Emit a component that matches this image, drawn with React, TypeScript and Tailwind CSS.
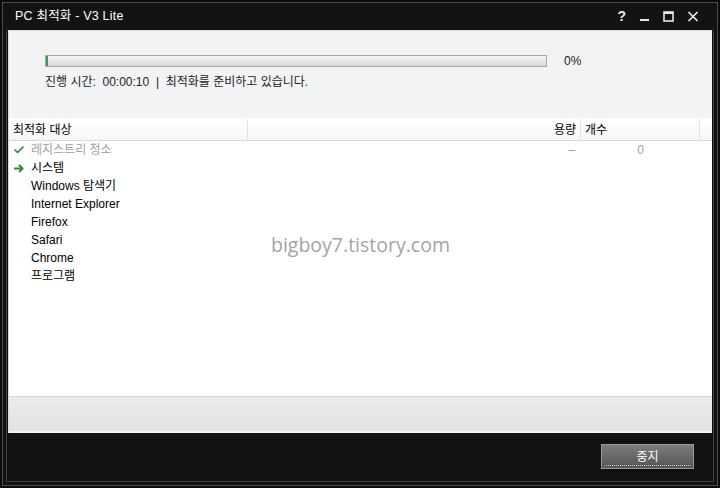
import { Check } from 'lucide-react';

const items = [
  { name: '레지스트리 청소', state: 'done' },
  { name: '시스템', state: 'active' },
  { name: 'Windows 탐색기', state: '' },
  { name: 'Internet Explorer', state: '' },
  { name: 'Firefox', state: '' },
  { name: 'Safari', state: '' },
  { name: 'Chrome', state: '' },
  { name: '프로그램', state: '' },
];

const font = { fontFamily: '"Liberation Sans", "Noto Sans CJK KR", sans-serif' };

function Arrow() {
  return (
    <svg width="11" height="9" viewBox="0 0 11 9">
      <path d="M0 4.5h8M5 1l3.5 3.5L5 8" stroke="#2f8a3c" strokeWidth="2" fill="none" />
    </svg>
  );
}

export default function App() {
  return (
    <div className="w-[720px] h-[488px] bg-[#0b0b0b] p-[2px] text-[12px]" style={font}>
      <div className="h-full border border-[#4b4b4b] flex flex-col bg-[#131313]">
        {/* title bar */}
        <div className="h-[26px] shrink-0 flex items-center pl-[12px] pr-[18px] text-white">
          <span className="text-[12.5px] tracking-[0.2px]">PC 최적화 - V3 Lite</span>
          <div className="ml-auto flex items-center gap-[13px] text-[#e8e8e8]">
            <span className="text-[14px] font-bold leading-none">?</span>
            <svg width="11" height="11" viewBox="0 0 11 11"><rect x="1" y="8" width="9" height="2" fill="#e8e8e8" /></svg>
            <svg width="11" height="11" viewBox="0 0 11 11"><rect x="1" y="1" width="9" height="9" fill="none" stroke="#e8e8e8" strokeWidth="1.6" /><rect x="1" y="1" width="9" height="2" fill="#e8e8e8" /></svg>
            <svg width="12" height="11" viewBox="0 0 12 11"><path d="M1.5 1l9 9M10.5 1l-9 9" stroke="#e8e8e8" strokeWidth="1.7" /></svg>
          </div>
        </div>

        <div className="flex-1 px-[3px] pb-[3px] flex flex-col">
          <div className="flex-1 border border-t-0 border-[#3b3b3b] p-[1px] flex flex-col">
            {/* main panel */}
            <div className="h-[403px] shrink-0 flex flex-col bg-white border-t border-l border-[#d8d8d8] relative">
              <div className="h-[88px] shrink-0 bg-[#f2f3f5] border-b border-white pl-[36px] pt-[21px]">
                <div className="flex items-center">
                  <div className="w-[502px] h-[12px] border border-[#a9a9a9] bg-gradient-to-b from-[#f4f4f4] to-[#d9d9d9] flex">
                    <div className="w-[2px] h-full bg-[#3c9a52]" />
                  </div>
                  <span className="ml-[17px] text-[#222]">0%</span>
                </div>
                <div className="mt-[3px] text-[#222] whitespace-pre">진행 시간:  00:00:10  |  최적화를 준비하고 있습니다.</div>
              </div>

              {/* list header */}
              <div className="h-[22px] shrink-0 flex bg-gradient-to-b from-white to-[#f6f6f6] border-b border-[#d6d6d6] text-black">
                <div className="w-[239px] pl-[4px] flex items-center border-r border-[#e2e2e2]">최적화 대상</div>
                <div className="w-[333px] pr-[4px] flex items-center justify-end border-r border-[#e2e2e2]">용량</div>
                <div className="w-[119px] pl-[4px] flex items-center border-r border-[#e2e2e2]">개수</div>
                <div className="flex-1" />
              </div>

              {/* rows */}
              <div className="flex-1 flex flex-col">
                {items.map((it) => (
                  <div key={it.name} className="h-[18px] flex items-center">
                    <div className="w-[239px] flex items-center">
                      <div className="w-[22px] flex justify-end pr-[6px]">
                        {it.state === 'done' && <Check size={12} strokeWidth={3.5} color="#2f8a3c" />}
                        {it.state === 'active' && <Arrow />}
                      </div>
                      <span className={it.state === 'done' ? 'text-[#a0a0a0]' : 'text-black'}>{it.name}</span>
                    </div>
                    {it.state === 'done' && (
                      <>
                        <div className="w-[333px] pr-[6px] text-right text-[#a0a0a0]">–</div>
                        <div className="w-[63px] text-right text-[#a0a0a0]">0</div>
                      </>
                    )}
                  </div>
                ))}
              </div>

              {/* bottom bar */}
              <div className="h-[37px] shrink-0 border-t border-[#d4d4d4] bg-gradient-to-b from-[#eaebed] to-[#e1e2e4] border-b-2 border-b-[#f4f4f4]" />

              <div className="absolute left-0 right-0 top-[199px] text-center text-[19.5px] text-[#a4a4a4]" style={{ fontFamily: '"Open Sans", "Noto Sans", sans-serif' }}>
                bigboy7.tistory.com
              </div>
            </div>

            {/* footer */}
            <div className="flex-1 bg-[#111111] flex justify-end items-start pt-[11px] pr-[18px]">
              <div className="w-[93px] h-[25px] border border-[#9a9a9a] bg-gradient-to-b from-[#7d7d7d] to-[#555555] p-[2px]">
                <div className="w-full h-full border border-dotted border-b-[#cfcfcf] border-t-transparent border-x-transparent flex items-center justify-center text-white text-[12px]">
                  중지
                </div>
              </div>
            </div>
          </div>
        </div>
      </div>
    </div>
  );
}
